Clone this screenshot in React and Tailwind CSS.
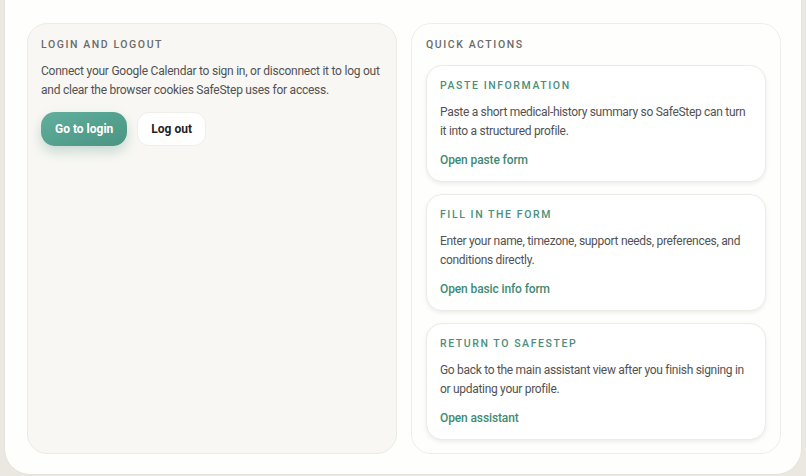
import React from 'react';

const ACTIONS = [
  {
    title: 'Paste information',
    body: 'Paste a short medical-history summary so SafeStep can turn it into a structured profile.',
    link: 'Open paste form',
  },
  {
    title: 'Fill in the form',
    body: 'Enter your name, timezone, support needs, preferences, and conditions directly.',
    link: 'Open basic info form',
  },
  {
    title: 'Return to SafeStep',
    body: 'Go back to the main assistant view after you finish signing in or updating your profile.',
    link: 'Open assistant',
  },
];

function ActionCard({ title, body, link }) {
  return (
    <div className="rounded-[16px] border border-[#ecebe6] bg-white px-[13px] pt-[13px] pb-[12px] shadow-[0_2px_4px_rgba(0,0,0,0.07)]">
      <h3 className="text-[10.5px] font-medium uppercase tracking-[0.15em] text-[#4b8f7b] leading-[14px]">{title}</h3>
      <p className="mt-[10px] text-[12px] tracking-[-0.025em] leading-[19px] text-[#525252]">{body}</p>
      <a href="#" className="mt-[10px] block text-[12px] font-medium tracking-[-0.01em] leading-[18px] text-[#3f8a73]">{link}</a>
    </div>
  );
}

export default function App() {
  return (
    <div className="min-h-screen bg-[#ebe8e1] px-[4px] font-['Roboto',sans-serif]">
      <div className="rounded-b-[26px] border-x border-b border-[#e6e3dc] bg-[#fefefd] pl-[22px] pr-[20px] pt-[23px] pb-[20px]">
        <div className="grid grid-cols-2 gap-[14px]">
          {/* Login / logout */}
          <section className="rounded-[20px] border border-[#ecebe6] bg-[#f8f7f4] px-[13px] pt-[14px]">
            <h2 className="text-[10.5px] font-medium uppercase tracking-[0.15em] text-[#6b6b68] leading-[14px]">Login and logout</h2>
            <p className="mt-[10px] text-[12px] tracking-[-0.02em] leading-[19px] text-[#525252]">
              Connect your Google Calendar to sign in, or disconnect it to log out and clear the browser cookies SafeStep uses for access.
            </p>
            <div className="mt-[12px] flex gap-[10px]">
              <button className="h-[34px] rounded-[14px] bg-gradient-to-br from-[#60af9c] to-[#4a9483] px-[14px] text-[12px] font-bold text-white shadow-[0_6px_12px_rgba(60,130,110,0.25)]">
                Go to login
              </button>
              <button className="h-[34px] rounded-[12px] border border-[#efeee9] bg-white px-[13px] text-[12px] font-bold text-[#1f1f1f]">
                Log out
              </button>
            </div>
          </section>

          {/* Quick actions */}
          <section className="rounded-[20px] border border-[#efeee9] bg-[#fefefd] px-[14px] pt-[14px] pb-[13px]">
            <h2 className="text-[10.5px] font-medium uppercase tracking-[0.15em] text-[#6b6b68] leading-[14px]">Quick actions</h2>
            <div className="mt-[13px] flex flex-col gap-[12px]">
              {ACTIONS.map((a) => (
                <ActionCard key={a.title} {...a} />
              ))}
            </div>
          </section>
        </div>
      </div>
    </div>
  );
}
